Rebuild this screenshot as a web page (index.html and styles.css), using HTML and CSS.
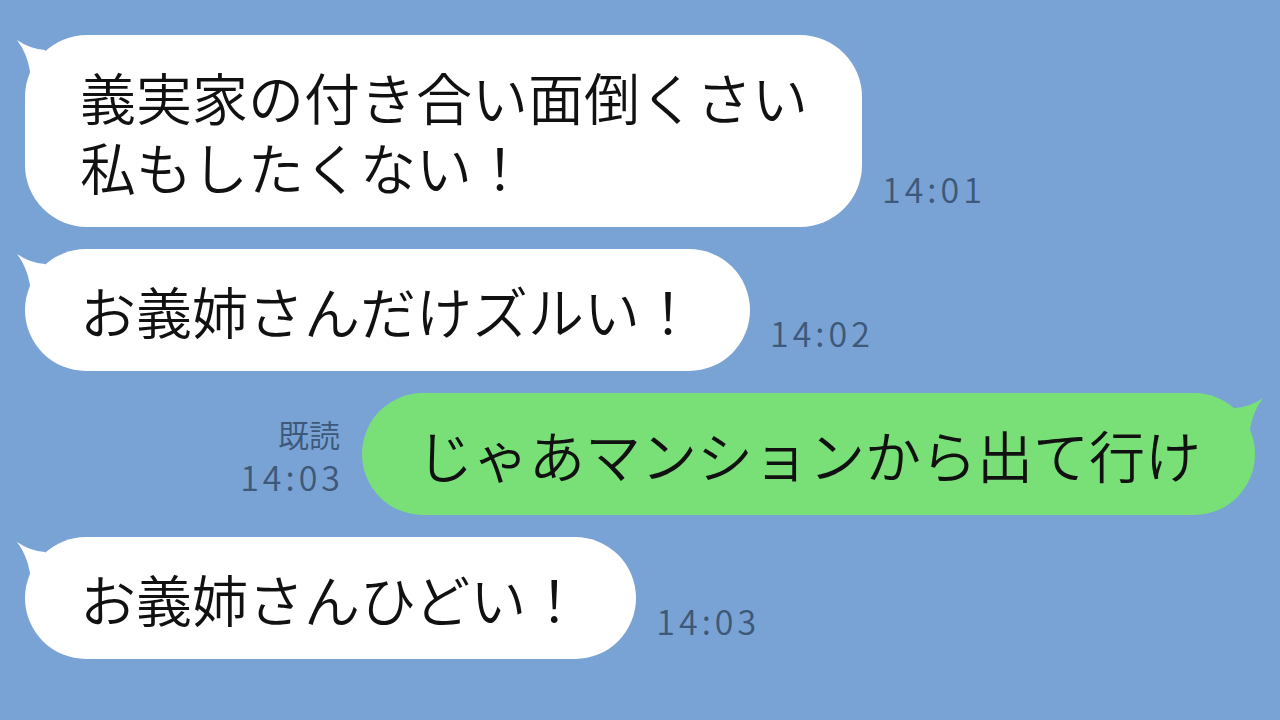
FILE: index.html
```html
<!DOCTYPE html>
<html lang="ja">
<head>
<meta charset="UTF-8">
<meta name="viewport" content="width=device-width, initial-scale=1.0">
<title>トーク</title>
<link rel="stylesheet" href="styles.css">
</head>
<body>

<div class="chat">

  <!-- received -->
  <div class="row in">
    <div class="bubble white">
      <svg class="tail" viewBox="0 0 50 60" aria-hidden="true"><path d="M2 5 Q15 14 30 15 L40 40 L15 50 L15 36 Q12 18 2 5Z"/></svg>
      <p>義実家の付き合い面倒くさい</p>
      <p>私もしたくない！</p>
    </div>
    <div class="meta"><span>14:01</span></div>
  </div>

  <div class="row in">
    <div class="bubble white">
      <svg class="tail" viewBox="0 0 50 60" aria-hidden="true"><path d="M2 5 Q15 14 30 15 L40 40 L15 50 L15 36 Q12 18 2 5Z"/></svg>
      <p>お義姉さんだけズルい！</p>
    </div>
    <div class="meta"><span>14:02</span></div>
  </div>

  <!-- sent -->
  <div class="row out">
    <div class="meta">
      <span class="read">既読</span>
      <span>14:03</span>
    </div>
    <div class="bubble green">
      <svg class="tail" viewBox="0 0 50 60" aria-hidden="true"><path d="M2 5 Q15 14 30 15 L40 40 L15 50 L15 36 Q12 18 2 5Z"/></svg>
      <p>じゃあマンションから出て行け</p>
    </div>
  </div>

  <div class="row in">
    <div class="bubble white">
      <svg class="tail" viewBox="0 0 50 60" aria-hidden="true"><path d="M2 5 Q15 14 30 15 L40 40 L15 50 L15 36 Q12 18 2 5Z"/></svg>
      <p>お義姉さんひどい！</p>
    </div>
    <div class="meta"><span>14:03</span></div>
  </div>

</div>

</body>
</html>
```

FILE: styles.css
```css
body {
  margin: 0;
  background-color: #7aa3d5;
  font-family: "Noto Sans CJK JP", "Noto Sans", sans-serif;
  color: #111;
}
.chat {
  display: flex;
  flex-direction: column;
  gap: 22px;
  padding: 35px 25px 0 25px;
  height: 720px;
  box-sizing: border-box;
  overflow: hidden;
}
.row {
  display: flex;
  align-items: flex-end;
  gap: 20px;
}
.row.out {
  justify-content: flex-end;
  gap: 22px;
}
.bubble {
  position: relative;
  font-size: 56px;
  font-weight: 350;
  padding: 26px 54px 26px 55px;
  border-radius: 62px;
  white-space: nowrap;
}
.bubble p {
  margin: 0;
  height: 70px;
  line-height: 70px;
}
.bubble.white {
  background-color: #fff;
}
.bubble.green {
  background-color: #79e078;
}
/* little horn at the top corner of each bubble */
.tail {
  position: absolute;
  top: 0;
  left: -10px;
  width: 50px;
  height: 60px;
}
.white .tail {
  fill: #fff;
}
.green .tail {
  fill: #79e078;
  left: auto;
  right: -10px;
  transform: scaleX(-1);
}
.meta {
  display: flex;
  flex-direction: column;
  align-items: flex-end;
  color: #3d5878;
  font-size: 34px;
  font-weight: 350;
  line-height: 43px;
  letter-spacing: 4px;
  margin-right: -4px;
  padding-bottom: 17px;
}
.meta .read {
  font-size: 31px;
  letter-spacing: 0;
  margin-right: 4px;
}
```
